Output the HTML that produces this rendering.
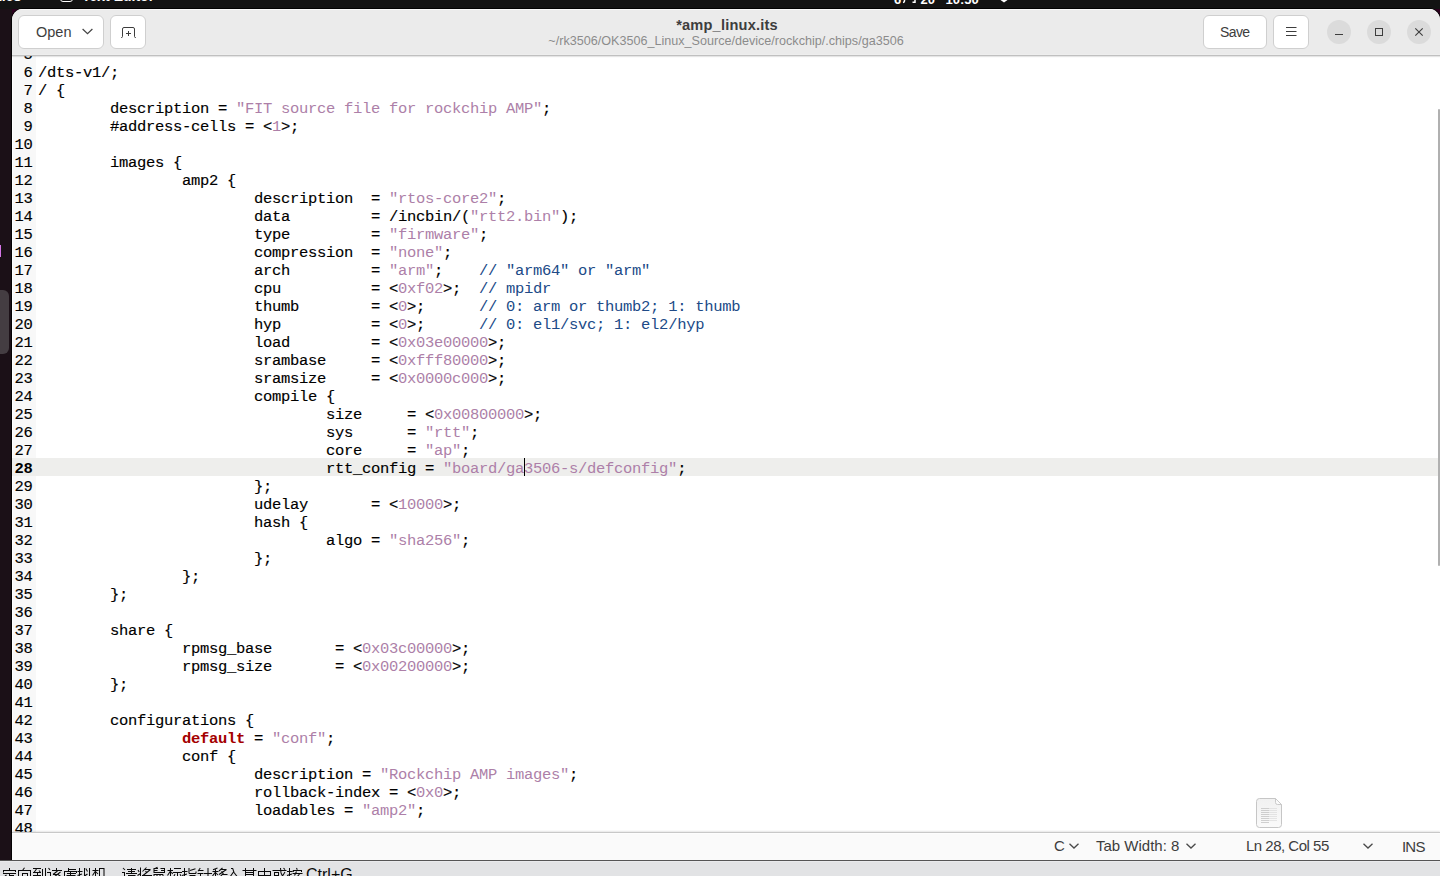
<!DOCTYPE html>
<html lang="en">
<head>
<meta charset="utf-8">
<title>amp_linux.its - gedit</title>
<style>
*{box-sizing:border-box;margin:0;padding:0}
html,body{width:1440px;height:876px;overflow:hidden}
body{position:relative;background:#2c001e;font-family:"Liberation Sans",sans-serif;color:#3d3d3d}
.abs{position:absolute}
/* desktop / top bar */
#topbar{left:0;top:0;width:1440px;height:9px;background:#131313;overflow:hidden}
#topbar .t{position:absolute;color:#fff;font-weight:bold;font-size:14px;line-height:16px;white-space:pre}
#dock{left:0;top:9px;width:12px;height:852px;background:#1b1017}
#dockind{left:0;top:245px;width:1.3px;height:12px;background:#d575e6}
#dockitem{left:-6px;top:290px;width:15px;height:64px;background:#443d42;border-radius:6px}
/* window */
#win{left:12px;top:9px;width:1428px;height:852px;background:#fff;border-radius:11px 11px 0 0;overflow:hidden;box-shadow:0 0 0 1px rgba(0,0,0,0.85)}
#hb{left:0;top:0;width:1428px;height:47px;background:#ebebeb;border-bottom:1px solid #c0c0c0;box-shadow:inset 0 1px 0 #f8f8f8, inset 0 -1px 0 #eeeeee, 0 1px 1px rgba(0,0,0,0.10);z-index:5}
.btn{position:absolute;top:6px;height:34px;background:#fff;border:1px solid #cfcfcf;border-radius:6px}
.lbl{position:absolute;font-size:14.5px;line-height:18px;color:#3d3d3d;white-space:pre}
.circ{position:absolute;top:11px;width:24px;height:24px;border-radius:50%;background:#dbdbdb}
#title{left:1px;top:6.5px;width:1428px;text-align:center;font-weight:bold;font-size:14.6px;letter-spacing:0.2px;line-height:18px;color:#3d3d3d;white-space:pre}
#sub{left:0;top:25px;width:1428px;text-align:center;font-size:12.6px;line-height:15px;color:#8b8b8b;white-space:pre}
/* editor */
#ed{left:0;top:35px;width:1428px;height:788px;background:#fff;overflow:hidden}
#gut{left:1px;top:0;width:23px;height:800px;background:#f8f8f8}
.ln{position:relative;height:18px;width:1428px;white-space:pre;font-family:"Liberation Mono",monospace;font-size:15.5px;letter-spacing:-0.3px;line-height:18px;color:#000;-webkit-text-stroke-width:0.15px}
.ln.cur{background:#eeeeec}
.ln.cur .no{font-weight:bold;-webkit-text-stroke-width:0}
.no{position:absolute;left:0;top:2px;width:20.5px;text-align:right;color:#000}
.tx{position:absolute;left:26px;top:2px}
.s,.n{color:#ad7fa8;-webkit-text-stroke-width:0}
.c{color:#204a87;-webkit-text-stroke-width:0}
.k{color:#a40000;font-weight:bold;-webkit-text-stroke-width:0}
#caret{left:512px;top:414px;width:1px;height:18px;background:#000}
#sb{left:1426px;top:100px;width:2px;height:457px;background:#b0b0b0;border-radius:1px}
/* status bar */
#st{left:0;top:823px;width:1428px;height:29px;background:#fafafa;border-top:1px solid #c8c8c8;box-shadow:0 -1px 1.5px rgba(0,0,0,0.10), inset 0 1px 0 #fdfdfd}
#st .t{position:absolute;top:4px;font-size:15px;line-height:18px;color:#3d3d3d;white-space:pre}
/* vm bar */
#vmline{left:0;top:860px;width:1440px;height:1px;background:#555}
#vm{left:0;top:861px;width:1440px;height:15px;background:#e2e3e5;overflow:hidden;box-shadow:inset 0 1px 0 #e9eaec}
svg{position:absolute;overflow:visible}
</style>
</head>
<body>
<div id="topbar" class="abs">
  <span class="t" style="left:-41px;top:-12.3px">Activities</span>
  <span class="t" style="left:82px;top:-12.3px">Text Editor</span>
  <div class="abs" style="left:60px;top:-8px;width:13px;height:10px;border:1.5px solid #fff;border-radius:3px"></div>
  <span class="t" style="left:894px;top:-8.5px;font-size:13px">6</span><span class="t" style="left:920.5px;top:-8.5px;font-size:13px">20</span><span class="t" style="left:945.5px;top:-8.5px;font-size:13px">10:50</span>
  <svg style="left:902.5px;top:0" width="14" height="3"><path d="M1.5 0 V1 Q1.5 2.2 0 2.5 M12 0 V2.2 H9.5" fill="none" stroke="#fff" stroke-width="1.5"/></svg>
  <svg style="left:1000px;top:0" width="8" height="3"><path d="M0.5 0 H7.5 L4 2.6 Z" fill="#fff"/></svg>
</div>
<div id="dock" class="abs"></div>
<div id="dockitem" class="abs"></div>
<div id="dockind" class="abs"></div>
<div id="win" class="abs">
 <div id="hb" class="abs">
  <div class="btn" style="left:6px;width:86px"></div>
  <span class="lbl" style="left:24px;top:14px">Open</span>
  <svg style="left:70px;top:19px" width="11" height="7" viewBox="0 0 11 7"><path d="M0.6 1 L5.5 5.6 L10.4 1" fill="none" stroke="#454545" stroke-width="1.25"/></svg>
  <div class="btn" style="left:98px;width:36px"></div>
  <svg style="left:0;top:0" width="140" height="46" viewBox="0 0 140 46"><path d="M109 28.5 H109.5 Q110.5 28.5 110.5 27.5 V20 Q110.5 18.5 112 18.5 H121 Q122.5 18.5 122.5 20 V27.5 Q122.5 28.5 123.5 28.5 H124" fill="none" stroke="#3d3d3d" stroke-width="1"/><path d="M116.5 22 V27 M114 24.5 H119" fill="none" stroke="#3d3d3d" stroke-width="1"/></svg>
  <div id="title" class="abs">*amp_linux.its</div>
  <div id="sub" class="abs">~/rk3506/OK3506_Linux_Source/device/rockchip/.chips/ga3506</div>
  <div class="btn" style="left:1191px;width:64px"></div>
  <span class="lbl" style="left:1208px;top:14px;font-size:14px;letter-spacing:-0.6px">Save</span>
  <div class="btn" style="left:1261px;width:36px"></div>
  <svg style="left:1274px;top:18px" width="11" height="10" viewBox="0 0 11 10"><path d="M0 0.5 H10.5 M0 4.5 H10.5 M0 8.5 H10.5" stroke="#3d3d3d" stroke-width="1" fill="none"/></svg>
  <div class="circ" style="left:1315px"></div>
  <svg style="left:1323px;top:25px" width="8" height="2"><path d="M0 0.5 H8" stroke="#3d3d3d" stroke-width="1"/></svg>
  <div class="circ" style="left:1355px"></div>
  <svg style="left:1363px;top:19px" width="8" height="8"><rect x="0.5" y="0.5" width="7" height="7" fill="none" stroke="#3d3d3d" stroke-width="1"/></svg>
  <div class="circ" style="left:1395px"></div>
  <svg style="left:1403px;top:19px" width="8" height="8"><path d="M0.3 0.3 L7.7 7.7 M7.7 0.3 L0.3 7.7" stroke="#3d3d3d" stroke-width="1.1" fill="none"/></svg>
 </div>
 <div id="ed" class="abs">
  <div id="gut" class="abs"></div>
<div class="ln"><span class="no">5</span><span class="tx"></span></div>
<div class="ln"><span class="no">6</span><span class="tx">/dts-v1/;</span></div>
<div class="ln"><span class="no">7</span><span class="tx">/ {</span></div>
<div class="ln"><span class="no">8</span><span class="tx">        description = <span class="s">"FIT source file for rockchip AMP"</span>;</span></div>
<div class="ln"><span class="no">9</span><span class="tx">        #address-cells = &lt;<span class="n">1</span>&gt;;</span></div>
<div class="ln"><span class="no">10</span><span class="tx"></span></div>
<div class="ln"><span class="no">11</span><span class="tx">        images {</span></div>
<div class="ln"><span class="no">12</span><span class="tx">                amp2 {</span></div>
<div class="ln"><span class="no">13</span><span class="tx">                        description  = <span class="s">"rtos-core2"</span>;</span></div>
<div class="ln"><span class="no">14</span><span class="tx">                        data         = /incbin/(<span class="s">"rtt2.bin"</span>);</span></div>
<div class="ln"><span class="no">15</span><span class="tx">                        type         = <span class="s">"firmware"</span>;</span></div>
<div class="ln"><span class="no">16</span><span class="tx">                        compression  = <span class="s">"none"</span>;</span></div>
<div class="ln"><span class="no">17</span><span class="tx">                        arch         = <span class="s">"arm"</span>;    <span class="c">// "arm64" or "arm"</span></span></div>
<div class="ln"><span class="no">18</span><span class="tx">                        cpu          = &lt;<span class="n">0xf02</span>&gt;;  <span class="c">// mpidr</span></span></div>
<div class="ln"><span class="no">19</span><span class="tx">                        thumb        = &lt;<span class="n">0</span>&gt;;      <span class="c">// 0: arm or thumb2; 1: thumb</span></span></div>
<div class="ln"><span class="no">20</span><span class="tx">                        hyp          = &lt;<span class="n">0</span>&gt;;      <span class="c">// 0: el1/svc; 1: el2/hyp</span></span></div>
<div class="ln"><span class="no">21</span><span class="tx">                        load         = &lt;<span class="n">0x03e00000</span>&gt;;</span></div>
<div class="ln"><span class="no">22</span><span class="tx">                        srambase     = &lt;<span class="n">0xfff80000</span>&gt;;</span></div>
<div class="ln"><span class="no">23</span><span class="tx">                        sramsize     = &lt;<span class="n">0x0000c000</span>&gt;;</span></div>
<div class="ln"><span class="no">24</span><span class="tx">                        compile {</span></div>
<div class="ln"><span class="no">25</span><span class="tx">                                size     = &lt;<span class="n">0x00800000</span>&gt;;</span></div>
<div class="ln"><span class="no">26</span><span class="tx">                                sys      = <span class="s">"rtt"</span>;</span></div>
<div class="ln"><span class="no">27</span><span class="tx">                                core     = <span class="s">"ap"</span>;</span></div>
<div class="ln cur"><span class="no">28</span><span class="tx">                                rtt_config = <span class="s">"board/ga3506-s/defconfig"</span>;</span></div>
<div class="ln"><span class="no">29</span><span class="tx">                        };</span></div>
<div class="ln"><span class="no">30</span><span class="tx">                        udelay       = &lt;<span class="n">10000</span>&gt;;</span></div>
<div class="ln"><span class="no">31</span><span class="tx">                        hash {</span></div>
<div class="ln"><span class="no">32</span><span class="tx">                                algo = <span class="s">"sha256"</span>;</span></div>
<div class="ln"><span class="no">33</span><span class="tx">                        };</span></div>
<div class="ln"><span class="no">34</span><span class="tx">                };</span></div>
<div class="ln"><span class="no">35</span><span class="tx">        };</span></div>
<div class="ln"><span class="no">36</span><span class="tx"></span></div>
<div class="ln"><span class="no">37</span><span class="tx">        share {</span></div>
<div class="ln"><span class="no">38</span><span class="tx">                rpmsg_base       = &lt;<span class="n">0x03c00000</span>&gt;;</span></div>
<div class="ln"><span class="no">39</span><span class="tx">                rpmsg_size       = &lt;<span class="n">0x00200000</span>&gt;;</span></div>
<div class="ln"><span class="no">40</span><span class="tx">        };</span></div>
<div class="ln"><span class="no">41</span><span class="tx"></span></div>
<div class="ln"><span class="no">42</span><span class="tx">        configurations {</span></div>
<div class="ln"><span class="no">43</span><span class="tx">                <span class="k">default</span> = <span class="s">"conf"</span>;</span></div>
<div class="ln"><span class="no">44</span><span class="tx">                conf {</span></div>
<div class="ln"><span class="no">45</span><span class="tx">                        description = <span class="s">"Rockchip AMP images"</span>;</span></div>
<div class="ln"><span class="no">46</span><span class="tx">                        rollback-index = &lt;<span class="n">0x0</span>&gt;;</span></div>
<div class="ln"><span class="no">47</span><span class="tx">                        loadables = <span class="s">"amp2"</span>;</span></div>
<div class="ln"><span class="no">48</span><span class="tx"></span></div>
  <div id="caret" class="abs"></div>
  <svg style="left:1244px;top:754px" width="26" height="30" viewBox="0 0 26 30"><defs><linearGradient id="dg" x1="0" y1="0" x2="0" y2="1"><stop offset="0" stop-color="#f1f1f1"/><stop offset="1" stop-color="#fafafa"/></linearGradient></defs><path d="M3.5 0.5 H19.5 L25.5 6.5 V26.5 Q25.5 29.5 22.5 29.5 H3.5 Q0.5 29.5 0.5 26.5 V3.5 Q0.5 0.5 3.5 0.5 Z" fill="url(#dg)" stroke="#c6c6c6" stroke-width="1"/><path d="M19.5 0.5 V4.5 Q19.5 6.5 21.5 6.5 H25.5 Z" fill="#fafafa" stroke="#cacaca" stroke-width="1"/><path d="M5 10.5 H13 M5 12.5 H13 M5 14.5 H13 M5 16.5 H13 M5 18.5 H13 M5 20.5 H13 M5 22.5 H13 M5 24.5 H13" stroke="#c4c4c4" stroke-width="0.8"/><path d="M13 10.5 H21 M13 12.5 H21 M13 14.5 H21 M13 16.5 H21 M13 18.5 H21 M13 20.5 H21 M13 22.5 H21" stroke="#dedede" stroke-width="0.8"/></svg>
 </div>
 <div id="sb" class="abs"></div>
 <div id="st" class="abs">
  <span class="t" style="left:1042px">C</span>
  <svg style="left:1057px;top:10px" width="10" height="6"><path d="M0.5 0.7 L5 5 L9.5 0.7" fill="none" stroke="#4a4a4a" stroke-width="1.3"/></svg>
  <span class="t" style="left:1084px">Tab Width: 8</span>
  <svg style="left:1174px;top:10px" width="10" height="6"><path d="M0.5 0.7 L5 5 L9.5 0.7" fill="none" stroke="#4a4a4a" stroke-width="1.3"/></svg>
  <span class="t" style="left:1234px;letter-spacing:-0.5px">Ln 28, Col 55</span>
  <svg style="left:1351px;top:10px" width="10" height="6"><path d="M0.5 0.7 L5 5 L9.5 0.7" fill="none" stroke="#4a4a4a" stroke-width="1.3"/></svg>
  <span class="t" style="left:1390px;top:5px;letter-spacing:-0.8px">INS</span>
 </div>
</div>
<div id="vmline" class="abs"></div>
<div id="vm" class="abs">
 <svg style="left:0;top:0" width="360" height="15" viewBox="0 861 360 15"><path d="M9.5 868 V870 M3 870.5 H16 M3.5 870 V872.5 M15.5 870 V872 M3 873.5 H16 M9.5 873 V877 M6.5 875 L4 877 M9.5 875.5 H14 M24.5 867.8 L22.5 870.5 M18 870.5 H31 M18.5 870 V877 M30.5 870 V877 M22 873.5 H28 M22.5 873 V877 M27.5 873 V877 M33 868.5 H41 M36.5 869 L34 872.5 M33 872.5 H41 M39 870.5 L40.5 872.5 M37.5 873 V877 M33 875.5 H41 M42.5 869 V877 M45.5 868 V877 M48.5 868 L50 869.8 M47 872.5 H50.5 M50.5 872 V877 M56.5 868 V870 M52 870.5 H62 M57.5 871 L53 874.5 M53 874.5 H58 M60.5 872 L54 877 M58 874.5 L61.5 877 M68.5 868 V871 M68.5 869.5 H76 M64 871.5 H77 M76.5 871 V873 M64.5 871 V877 M67 873.5 H76 M70.5 872 V876 M66.5 875.5 H75.5 M79.5 868 V877 M77.5 871.5 H82.5 M77.5 875.5 L82 874 M84.5 868 V877 M85.8 868.5 L87.5 871.5 M89.5 868 V877 M84.5 876 L87.5 874 M95.5 868 V877 M92.5 870.5 H98.5 M95.5 871 L92.5 875.5 M95.5 871.5 L98 874 M99.5 868.5 H104.5 M99.5 868 V877 M104 868 V877 M123 868 L125 870 M122 872.5 H125 M124.5 872 V877 M131.5 868 V874 M127 869.5 H136 M128 871.5 H135 M126 873.5 H137 M128 875.5 H135.5 M128.5 875 V877 M135 875 V877 M140.5 867.5 V877 M138 870 L139.2 872 M137.5 875.5 L140.5 873.5 M146.5 867.5 L142.5 871.5 M144.5 869.5 H150.5 M150.5 869.5 L143 875.5 M145.5 871 L147 872.8 M142 875.5 H152 M157.5 867.3 L155.5 868.3 M154 868 V873 M164.5 868 V873 M154 868.5 H158 M160.5 868.5 H164.5 M154 870.5 H157.5 M161 870.5 H164.5 M154 872.5 H164.5 M154 874 V877 M157 874.5 V877 M160 874 V877 M163 874.5 V877 M154 874.5 H163 M170.5 868 V877 M167.5 870.5 H173 M170.5 871 L167.5 875.5 M170.5 871.5 L172.8 874 M174 868.5 H181 M172.8 872.5 H182 M177.5 872 V877 M175 874.2 L173.5 877 M180 874.2 L181.5 877 M184.5 868 V877 M182 871.5 H187.5 M182 875.5 L187 874 M189 868 V873.5 M195.5 868.8 L190 870.5 M189 873.5 H196 M196 871.5 V873.5 M189.5 875.5 H195.5 M190 875 V877 M195 875 V877 M200.3 868 L198 871.3 M199 870.5 H203.5 M197.5 873.5 H203 M200.5 873 V877 M208 868 V877 M203.5 873.5 H212 M217.5 868 L213 869.8 M212.5 871.5 H218.5 M215.5 869.5 V877 M215.5 872 L212.5 876 M215.5 872.5 L218 875 M222.5 868 L219 871 M221.5 869.5 H226.5 M226.5 869.5 L219 874.5 M221.5 871.3 L223 872.8 M223.5 873 L220 877 M222.5 874.5 H227.5 M231 868.5 H233 M232.7 868.3 L234 872.5 M234 872.5 L237.5 877 M233.8 871.5 L230 877 M245.5 868 V877 M253.5 868 V877 M242.5 870.5 H256.5 M245.5 872.5 H253.5 M245.5 874.5 H253.5 M264.5 868 V877 M258 871.5 H271 M258.5 871 V877 M270.5 871 V877 M258.5 875.5 H270.5 M272.5 870.5 H286.5 M280.5 868 L281 873 M281 873 L283 877 M283.5 868 L285 869.7 M274 872.5 H279 M274.5 872 V876 M278.5 872 V876 M274.5 875.5 H278.5 M285 872 L282.5 876 M289.5 868 V877 M287 871.5 H292.5 M287 875.5 L292 874 M296.5 868 L297.3 869.8 M292.8 870.5 H302 M293.3 870 V872 M301.5 870 V872 M296.5 871.5 L294.5 875.5 M292.5 873.5 H302.5 M299.5 874 L297 877" fill="none" stroke="#0a0a0a" stroke-width="1.05"/></svg>
 <span class="abs" style="left:306px;top:5px;font-size:16px;line-height:18px;color:#0a0a0a;white-space:pre">Ctrl+G</span>
</div>
</body>
</html>
